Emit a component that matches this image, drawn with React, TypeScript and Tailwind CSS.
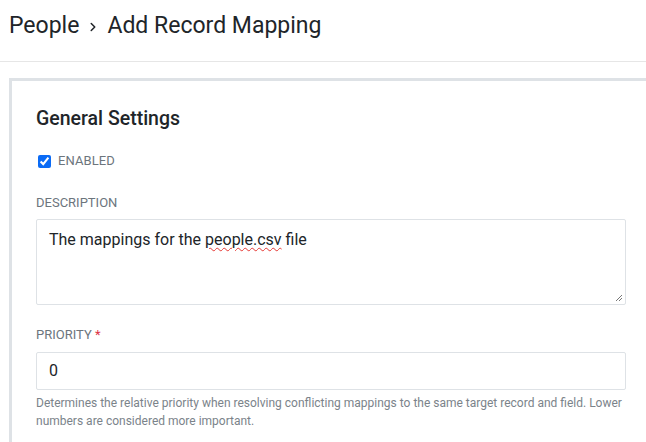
import React from 'react';
import { ChevronRight } from 'lucide-react';

const App: React.FC = () => {
  return (
    <div className="w-[646px] h-[442px] overflow-hidden bg-white font-['Roboto',sans-serif] text-[#212529]">
      {/* Header */}
      <div className="px-[9px] pt-[12px] pb-[21px] border-b border-[#e6e6e6]">
        <h1 className="text-[23px] leading-[28px] font-normal flex items-center">
          <span>People</span>
          <ChevronRight size={14} strokeWidth={2.6} className="mx-[7px] mt-[1px]" />
          <span>Add Record Mapping</span>
        </h1>
      </div>

      {/* Card */}
      <div className="pl-[9px] mt-[16px]">
        <div className="w-[680px] border-[3px] border-[#dee2e6] bg-white pl-[24px] pt-[26px] pb-[20px]">
          <div className="w-[590px]">
            <h2 className="text-[19.5px] leading-[24px] font-medium text-[#212529]">General Settings</h2>

            <label className="mt-[20px] h-[20px] flex items-center gap-[7px] text-[13px] text-[#6c757d]">
              <input type="checkbox" defaultChecked className="ml-[2px] w-[13px] h-[13px] accent-[#0b6bf5] m-0" />
              <span className="tracking-[0.1px]">ENABLED</span>
            </label>

            <div className="mt-[22px] text-[13px] leading-[20px] text-[#6c757d]">DESCRIPTION</div>
            <div className="relative mt-[6px] h-[86px] border border-[#dee2e6] rounded-[2px] px-[12px] pt-[8px] text-[16px] leading-[24px] text-[#212529]">
              The mappings for the{' '}
              <span className="underline decoration-wavy decoration-[#e53935] decoration-[1px] underline-offset-[2px]">people.csv</span>{' '}
              file
              <svg className="absolute right-[2px] bottom-[2px]" width="8" height="8" viewBox="0 0 8 8">
                <path d="M7 1 L1 7 M7 4 L4 7" stroke="#777" strokeWidth="1" fill="none" />
              </svg>
            </div>

            <div className="mt-[20px] text-[13px] leading-[20px] text-[#6c757d]">
              PRIORITY <span className="text-[#dc3545]">*</span>
            </div>
            <div className="mt-[7px] h-[38px] border border-[#dee2e6] rounded-[2px] px-[12px] flex items-center text-[16px] text-[#212529]">
              0
            </div>
            <p className="mt-[4px] text-[12px] leading-[18px] text-[#7b838a]">
              Determines the relative priority when resolving conflicting mappings to the same target record and field. Lower numbers are considered more important.
            </p>
          </div>
        </div>
      </div>
    </div>
  );
};

export default App;
